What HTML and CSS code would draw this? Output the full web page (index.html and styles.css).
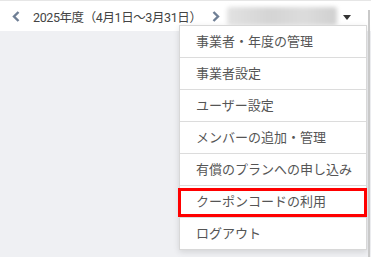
FILE: index.html
```html
<!DOCTYPE html>
<html lang="ja">
<head>
    <meta charset="UTF-8">
    <meta name="viewport" content="width=device-width, initial-scale=1.0">
    <title>年度メニュー</title>
    <link rel="stylesheet" href="styles.css">
</head>
<body>
    <div class="page">
        <header class="topbar">
            <button class="nav-arrow" aria-label="前年度">
                <svg width="8" height="11" viewBox="0 0 8 11"><path d="M6.5 1 L2 5.5 L6.5 10" fill="none" stroke="#6f7f95" stroke-width="2.4"/></svg>
            </button>
            <span class="period">2025年度（4月1日〜3月31日）</span>
            <button class="nav-arrow" aria-label="次年度">
                <svg width="8" height="11" viewBox="0 0 8 11"><path d="M1.5 1 L6 5.5 L1.5 10" fill="none" stroke="#6f7f95" stroke-width="2.4"/></svg>
            </button>
            <div class="account">
                <span class="account-name"></span>
                <span class="caret"></span>
            </div>
        </header>
        <main class="content"></main>

        <ul class="menu">
            <li>事業者・年度の管理</li>
            <li>事業者設定</li>
            <li>ユーザー設定</li>
            <li>メンバーの追加・管理</li>
            <li>有償のプランへの申し込み</li>
            <li class="highlight">クーポンコードの利用</li>
            <li>ログアウト</li>
        </ul>
        <div class="scrollbar"></div>
    </div>
</body>
</html>
```

FILE: styles.css
```css
body {
    margin: 0;
    font-family: Roboto, "Noto Sans CJK JP", sans-serif;
    background-color: #eff0f3;
}

.page {
    position: relative;
    height: 257px;
    overflow: hidden;
}

.topbar {
    display: flex;
    align-items: center;
    height: 30px;
    background: white;
    border-top: 1px solid #e6e6e6;
    padding-left: 10px;
}

.nav-arrow {
    display: flex;
    align-items: center;
    background: none;
    border: none;
    padding: 0 2px;
    height: 30px;
}

.period {
    font-size: 12.5px;
    color: #444;
    margin: 0 8px 0 11px;
    letter-spacing: -0.4px;
}

.account {
    display: flex;
    align-items: center;
    margin-left: 5px;
}

.account-name {
    display: block;
    width: 110px;
    height: 18px;
    background: linear-gradient(90deg, #e2e2e2, #d4d4d4 40%, #dcdcdc 70%, #d0d0d0);
    border-radius: 3px;
    filter: blur(2px);
}

.caret {
    width: 0;
    height: 0;
    margin-left: 6px;
    margin-top: 2px;
    border-left: 4px solid transparent;
    border-right: 4px solid transparent;
    border-top: 5px solid #333;
}

.content {
    height: 226px;
}

.menu {
    position: absolute;
    top: 25px;
    left: 179px;
    width: 186px;
    margin: 0;
    padding: 0;
    list-style: none;
    background: white;
    border: 1px solid #d8d8d8;
    box-shadow: 0 2px 6px rgba(0,0,0,0.12);
}

.menu li {
    position: relative;
    height: 31px;
    line-height: 31px;
    padding-left: 16px;
    font-size: 13px;
    color: #555;
    border-top: 1px solid #dcdcdc;
}

.menu li:first-child {
    border-top: none;
}

/* red marker box drawn over the item */
.menu li.highlight::after {
    content: "";
    position: absolute;
    top: 2px;
    left: -2px;
    right: -1px;
    height: 23px;
    border: 3px solid #ff0000;
}

.scrollbar {
    position: absolute;
    top: 10px;
    right: 1px;
    width: 2px;
    bottom: 0;
    background: #c9c9c9;
}
```
